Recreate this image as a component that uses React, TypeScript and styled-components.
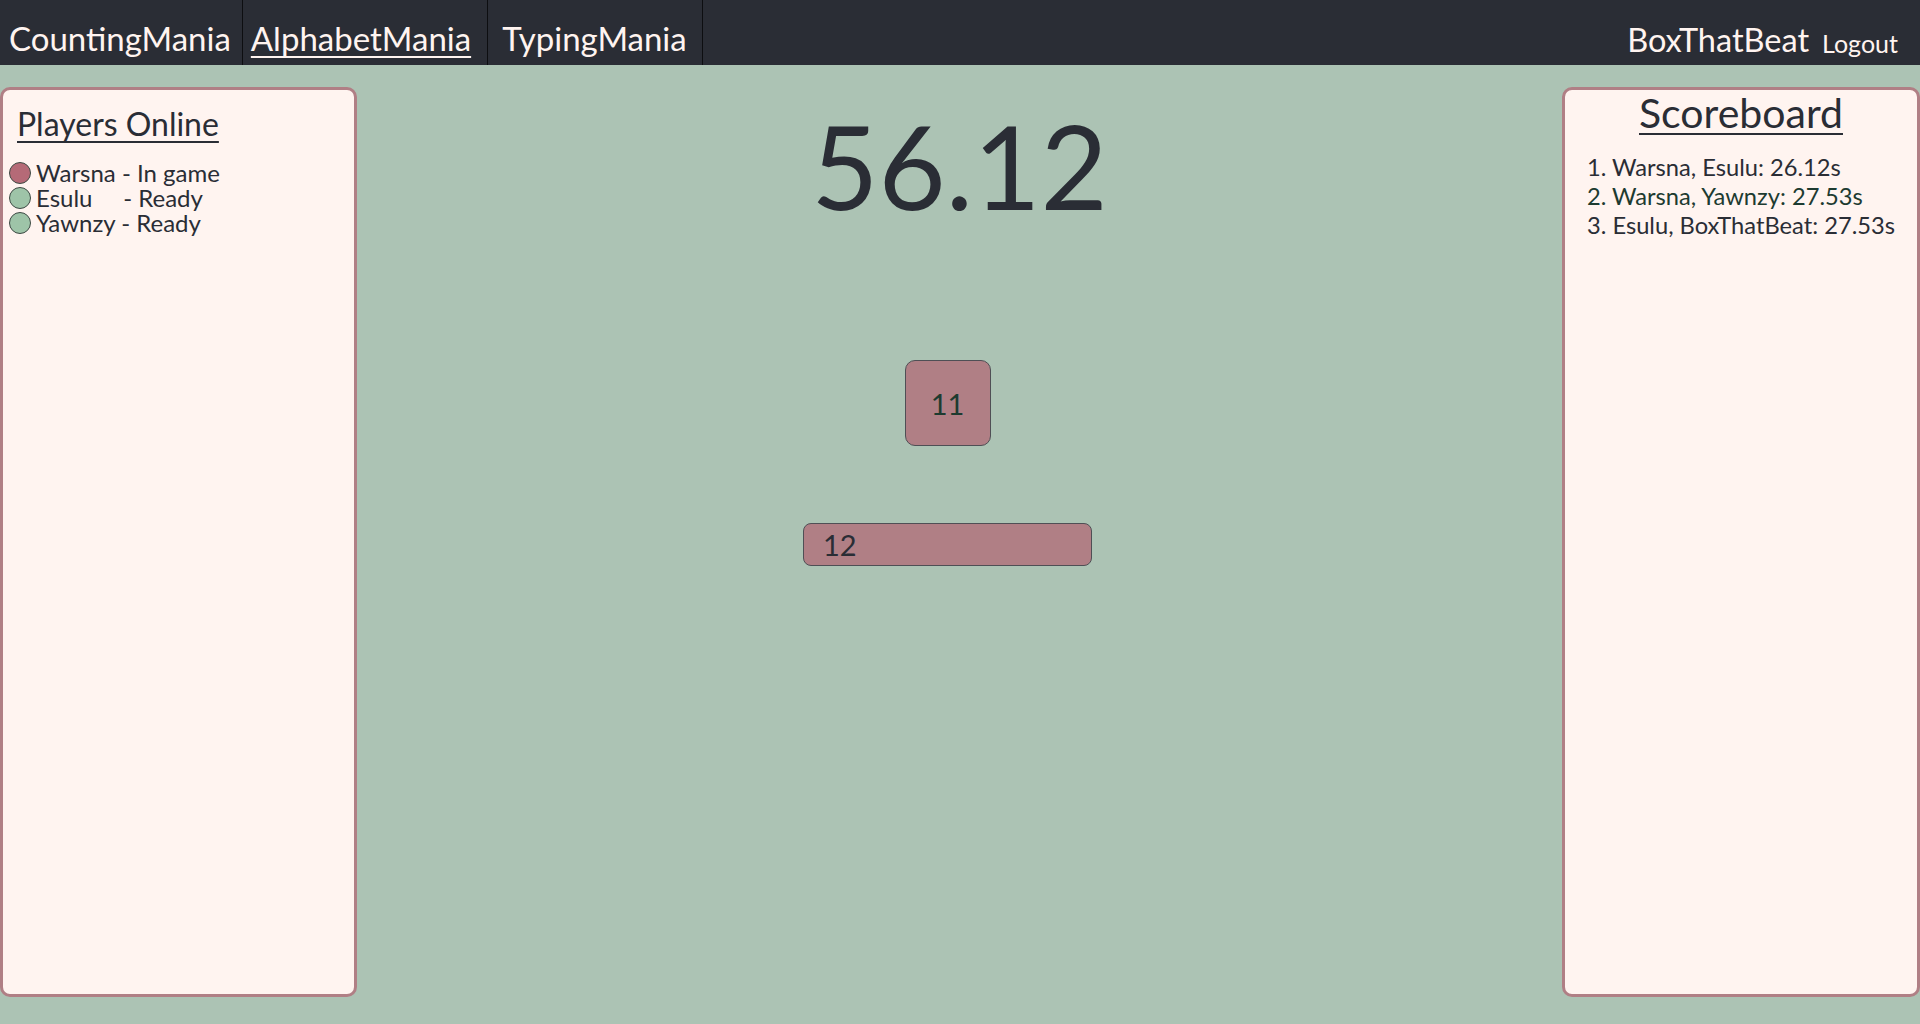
import React from "react";
import styled, { createGlobalStyle } from "styled-components";

const GlobalStyle = createGlobalStyle`
  html, body {
    margin: 0;
    padding: 0;
    background: #acc3b4;
    font-family: Lato, "Open Sans", sans-serif;
    color: #2a2d35;
  }
  * { box-sizing: border-box; }
`;

const Page = styled.div`
  display: flex;
  flex-direction: column;
  height: 1024px;
  background: #acc3b4;
`;

const NavBar = styled.nav`
  height: 65px;
  flex: none;
  background: #2a2d35;
  display: flex;
  justify-content: space-between;
  align-items: stretch;
`;

const NavGroup = styled.div`
  display: flex;
  align-items: stretch;
`;

const NavItem = styled.a<{ $active?: boolean; $padL: number; $padR: number }>`
  display: flex;
  align-items: flex-end;
  padding: 0 ${(p) => p.$padR}px 6px ${(p) => p.$padL}px;
  border-right: 1px solid #0d0e11;
  font-size: 33px;
  line-height: 1.2;
  color: #fff4f0;
  text-decoration: ${(p) => (p.$active ? "underline" : "none")};
  text-decoration-thickness: 2px;
  text-underline-offset: 5px;
  cursor: pointer;
`;

const UserArea = styled.div`
  display: flex;
  align-items: flex-end;
  gap: 13px;
  padding: 0 22px 6px 0;
`;

const UserName = styled.span`
  font-size: 32.5px;
  line-height: 1.2;
  color: #fff4f0;
`;

const Logout = styled.a`
  font-size: 25px;
  line-height: 1.2;
  color: #fff4f0;
  padding-bottom: 1px;
  cursor: pointer;
`;

const Main = styled.main`
  flex: 1;
  display: grid;
  grid-template-columns: 357px 1fr 358px;
  padding: 22px 0 27px 0;
`;

const Panel = styled.section`
  background: #fff4f0;
  border: 3px solid #b07f85;
  border-radius: 10px;
  display: flex;
  flex-direction: column;
`;

const PanelTitle = styled.h2<{ $center?: boolean; $size: number }>`
  margin: 0;
  font-weight: 400;
  font-size: ${(p) => p.$size}px;
  line-height: 1.1;
  text-align: ${(p) => (p.$center ? "center" : "left")};
  text-decoration: underline;
  text-decoration-thickness: 2px;
  text-underline-offset: 5px;
  color: #2a2d35;
`;

const PlayersTitle = styled(PanelTitle)`
  line-height: 1.2;
  margin: 15px 0 0 14px;
`;

const PlayerList = styled.ul`
  list-style: none;
  margin: 17px 0 0 0;
  padding: 0 0 0 6px;
`;

const PlayerRow = styled.li`
  display: flex;
  align-items: center;
  gap: 5px;
  height: 25px;
  font-size: 24px;
  line-height: 25px;
  white-space: pre;
  color: #2a2d35;
`;

const StatusDot = styled.span<{ $status: "ingame" | "ready" }>`
  width: 22px;
  height: 22px;
  flex: none;
  border-radius: 50%;
  border: 1px solid #3d4a44;
  background: ${(p) => (p.$status === "ingame" ? "#b56a77" : "#9ec4a8")};
`;

const ScoreList = styled.ol`
  list-style: none;
  margin: 18px 0 0 0;
  padding: 0 0 0 22px;
`;

const ScoreRow = styled.li<{ $highlight?: boolean }>`
  font-size: 23.7px;
  line-height: 29px;
  color: ${(p) => (p.$highlight ? "#1d3b30" : "#2a2d35")};
`;

const Center = styled.div`
  display: flex;
  flex-direction: column;
  align-items: center;
`;

const Timer = styled.div`
  margin-top: 21px;
  font-size: 116px;
  line-height: 1;
  color: #2a2d35;
`;

const GameArea = styled.div`
  display: flex;
  flex-direction: column;
  align-items: center;
  margin-right: 24px;
  margin-top: 136px;
`;

const NumberTile = styled.div`
  width: 86px;
  height: 86px;
  border-radius: 10px;
  border: 1px solid #4f4f55;
  background: #b07f85;
  display: flex;
  align-items: center;
  justify-content: center;
  font-size: 29px;
  color: #1d3b30;
`;

const AnswerInput = styled.input`
  margin-top: 77px;
  width: 289px;
  height: 43px;
  border-radius: 8px;
  border: 1px solid #4f4f55;
  background: #b07f85;
  padding: 0 0 0 19px;
  font-family: Lato, "Open Sans", sans-serif;
  font-size: 29px;
  color: #2a2d35;
  outline: none;
`;

const players: { name: string; status: "ingame" | "ready"; label: string }[] = [
  { name: "Warsna", status: "ingame", label: "Warsna - In game" },
  { name: "Esulu", status: "ready", label: "Esulu     - Ready" },
  { name: "Yawnzy", status: "ready", label: "Yawnzy - Ready" },
];

const scores = [
  { text: "1. Warsna, Esulu: 26.12s" },
  { text: "2. Warsna, Yawnzy: 27.53s", highlight: true },
  { text: "3. Esulu, BoxThatBeat: 27.53s" },
];

export default function App() {
  return (
    <>
      <GlobalStyle />
      <Page>
        <NavBar>
          <NavGroup>
            <NavItem $padL={9} $padR={11}>CountingMania</NavItem>
            <NavItem $active $padL={8} $padR={16}>AlphabetMania</NavItem>
            <NavItem $padL={14} $padR={15}>TypingMania</NavItem>
          </NavGroup>
          <UserArea>
            <UserName>BoxThatBeat</UserName>
            <Logout>Logout</Logout>
          </UserArea>
        </NavBar>
        <Main>
          <Panel>
            <PlayersTitle $size={32}>Players Online</PlayersTitle>
            <PlayerList>
              {players.map((p) => (
                <PlayerRow key={p.name}>
                  <StatusDot $status={p.status} />
                  {p.label}
                </PlayerRow>
              ))}
            </PlayerList>
          </Panel>
          <Center>
            <Timer>56.12</Timer>
            <GameArea>
              <NumberTile>11</NumberTile>
              <AnswerInput defaultValue="12" />
            </GameArea>
          </Center>
          <Panel>
            <PanelTitle $center $size={41}>Scoreboard</PanelTitle>
            <ScoreList>
              {scores.map((s) => (
                <ScoreRow key={s.text} $highlight={s.highlight}>
                  {s.text}
                </ScoreRow>
              ))}
            </ScoreList>
          </Panel>
        </Main>
      </Page>
    </>
  );
}
